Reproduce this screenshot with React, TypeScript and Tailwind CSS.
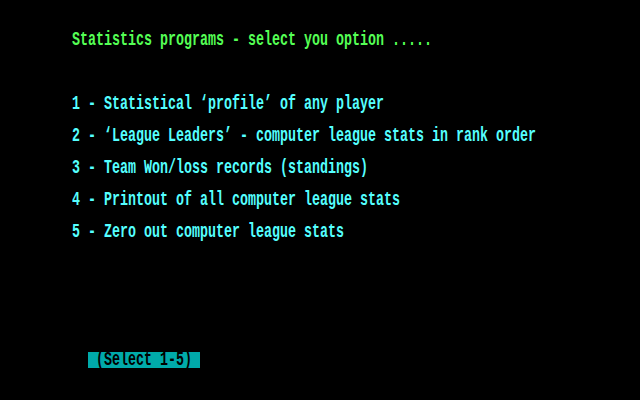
export default function App() {
  const items = [
    "1 - Statistical ‘profile’ of any player",
    "2 - ‘League Leaders’ - computer league stats in rank order",
    "3 - Team Won/loss records (standings)",
    "4 - Printout of all computer league stats",
    "5 - Zero out computer league stats",
  ];

  return (
    <div
      className="w-[640px] h-[400px] bg-black overflow-hidden pt-8 pl-[72px] text-[13.333px] leading-4 whitespace-pre"
      style={{ fontFamily: '"Liberation Mono", "DejaVu Sans Mono", monospace' }}
    >
      {/* Title */}
      <div className="h-4 text-[#55ff55] font-bold">
        <span className="inline-block scale-y-150">Statistics programs - select you option .....</span>
      </div>

      {/* Menu options */}
      <div className="mt-12 flex flex-col gap-4">
        {items.map((item) => (
          <div key={item} className="h-4 text-[#55ffff] font-bold">
            <span className="inline-block scale-y-150">{item}</span>
          </div>
        ))}
      </div>

      {/* Prompt */}
      <div className="mt-[112px] pl-4 h-4">
        <span className="inline-block h-4 bg-[#00aaaa] text-black font-bold">
          <span className="inline-block scale-y-150"> (Select 1-5) </span>
        </span>
      </div>
    </div>
  );
}
